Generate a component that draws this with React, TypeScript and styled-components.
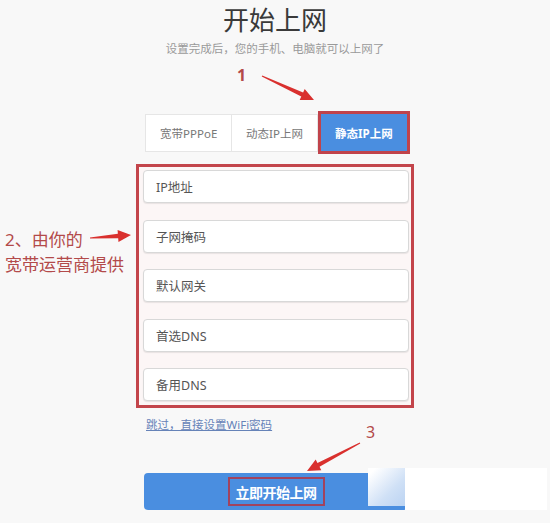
import React from "react";
import styled, { createGlobalStyle } from "styled-components";

const Global = createGlobalStyle`
  html, body { margin: 0; padding: 0; background: #f8f8f8; }
  * { box-sizing: border-box; }
`;

const FONT = `"Noto Sans", "Noto Sans CJK SC", sans-serif`;

const Page = styled.div`
  position: relative;
  width: 550px;
  height: 523px;
  overflow: hidden;
  background: #f8f8f8;
  font-family: ${FONT};
  display: flex;
  flex-direction: column;
`;

const Title = styled.h1`
  margin: 0;
  padding-top: 2px;
  height: 38px;
  text-align: center;
  font-size: 26px;
  font-weight: 400;
  line-height: 36px;
  color: #3a3a3a;
`;

const Subtitle = styled.p`
  margin: 0;
  height: 22px;
  line-height: 22px;
  text-align: center;
  font-size: 11.5px;
  color: #9a9a9a;
`;

const Tabs = styled.div`
  display: flex;
  margin: 54px 0 0 145px;
  width: 264px;
  height: 38px;
  background: #fff;
  border: 1px solid #e6e6e6;
`;

const Tab = styled.div<{ $w: number; $active?: boolean }>`
  position: relative;
  width: ${(p) => p.$w}px;
  display: flex;
  align-items: center;
  justify-content: center;
  font-size: 11.5px;
  color: ${(p) => (p.$active ? "#fff" : "#777")};
  font-weight: ${(p) => (p.$active ? 700 : 400)};
  border-right: ${(p) => (p.$active ? "none" : "1px solid #e6e6e6")};
  background: ${(p) => (p.$active ? "#4a8ee0" : "#fff")};
  ${(p) =>
    p.$active &&
    `margin: -4px -2px -3px 0; border: 3px solid #c0434b;`}
`;

const FormBox = styled.div`
  margin: 12px 0 0 136px;
  width: 278px;
  height: 244px;
  border: 3px solid #c3454b;
  padding: 3px 2px 4px 4px;
  display: flex;
  flex-direction: column;
  gap: 16.5px;
  background: #fcf6f6;
`;

const Field = styled.div`
  height: 33px;
  background: #fff;
  border: 1px solid #d8d8d8;
  border-radius: 4px;
  box-shadow: 0 1px 1px rgba(0, 0, 0, 0.08);
  display: flex;
  align-items: center;
  padding-left: 12px;
  font-size: 12.5px;
  color: #555;
`;

const SkipLink = styled.a`
  margin: 9px 0 0 146px;
  width: max-content;
  font-size: 11.5px;
  line-height: 16px;
  color: #6683b8;
  text-decoration: underline;
`;

const StartButton = styled.div`
  margin: 40px 0 0 144px;
  width: 264px;
  height: 37px;
  background: #4a8ee0;
  border-radius: 4px;
  display: flex;
  align-items: center;
  justify-content: center;
`;

const ButtonLabel = styled.span`
  border: 2px solid #a2435e;
  padding: 2px 6px;
  height: 29px;
  display: flex;
  align-items: center;
  color: #fff;
  font-weight: 700;
  font-size: 14px;
  letter-spacing: -0.5px;
`;

const Note = styled.div<{ $x: number; $y: number; $size: number; $bold?: boolean }>`
  position: absolute;
  left: ${(p) => p.$x}px;
  top: ${(p) => p.$y}px;
  font-size: ${(p) => p.$size}px;
  line-height: 1.45;
  color: #b34a4a;
  font-weight: ${(p) => (p.$bold ? 700 : 400)};
  font-family: ${FONT};
`;

const Overlay = styled.svg`
  position: absolute;
  left: 0;
  top: 0;
  pointer-events: none;
`;

const Glare = styled.div`
  position: absolute;
  left: 368px;
  top: 468px;
  width: 40px;
  height: 38px;
  background: linear-gradient(135deg, #ffffff 10%, #cfe0f6 60%, #b9d2f2 100%);
`;

const Blank = styled.div`
  position: absolute;
  left: 405px;
  top: 468px;
  width: 142px;
  height: 42px;
  background: #fff;
`;

function Arrow({ x1, y1, x2, y2 }: { x1: number; y1: number; x2: number; y2: number }) {
  const dx = x2 - x1;
  const dy = y2 - y1;
  const len = Math.hypot(dx, dy);
  const ux = dx / len;
  const uy = dy / len;
  const nx = -uy;
  const ny = ux;
  const head = 13;
  const hw = 6;
  const bx = x2 - ux * head;
  const by = y2 - uy * head;
  const pts = [
    [x1 + nx * 0.6, y1 + ny * 0.6],
    [bx + nx * 2.2, by + ny * 2.2],
    [bx + nx * hw, by + ny * hw],
    [x2, y2],
    [bx - nx * hw, by - ny * hw],
    [bx - nx * 2.2, by - ny * 2.2],
    [x1 - nx * 0.6, y1 - ny * 0.6],
  ]
    .map((p) => p.join(","))
    .join(" ");
  return <polygon points={pts} fill="#d9302e" />;
}

export default function App() {
  return (
    <>
      <Global />
      <Page>
        <Title>开始上网</Title>
        <Subtitle>设置完成后，您的手机、电脑就可以上网了</Subtitle>
        <Tabs>
          <Tab $w={87}>宽带PPPoE</Tab>
          <Tab $w={86}>动态IP上网</Tab>
          <Tab $w={93} $active>
            静态IP上网
          </Tab>
        </Tabs>
        <FormBox>
          <Field>IP地址</Field>
          <Field>子网掩码</Field>
          <Field>默认网关</Field>
          <Field>首选DNS</Field>
          <Field>备用DNS</Field>
        </FormBox>
        <SkipLink>跳过，直接设置WiFi密码</SkipLink>
        <StartButton>
          <ButtonLabel>立即开始上网</ButtonLabel>
        </StartButton>

        <Note $x={237} $y={64} $size={16} $bold>
          1
        </Note>
        <Note $x={5} $y={228} $size={17}>
          2、由你的
          <br />
          宽带运营商提供
        </Note>
        <Note $x={366} $y={421} $size={16}>
          3
        </Note>
        <Overlay width={550} height={523}>
          <Arrow x1={262} y1={76} x2={314} y2={100} />
          <Arrow x1={90} y1={238} x2={131} y2={235} />
          <Arrow x1={360} y1={443} x2={307} y2={471} />
        </Overlay>
        <Glare />
        <Blank />
      </Page>
    </>
  );
}
